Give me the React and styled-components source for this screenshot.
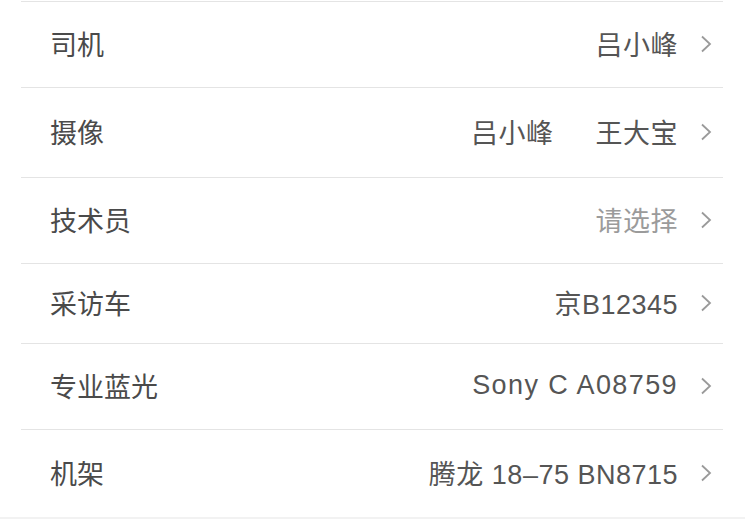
import React from "react"
import styled, { createGlobalStyle } from "styled-components"

const Global = createGlobalStyle`
  body {
    margin: 0;
    background: #fff;
    font-family: "Liberation Sans", "Noto Sans CJK SC", sans-serif;
  }
`

const List = styled.div`
  display: flex;
  flex-flow: column;
  padding-top: 1px;
  background: #fff;
`

const Row = styled.div`
  display: flex;
  align-items: center;
  justify-content: space-between;
  box-sizing: border-box;
  height: ${p => p.h + 1}px;
  margin: 0 22px 0 21px;
  border-top: 1px solid #e4e4e4;
  padding: 0 10px 2px 29px;
`

const Label = styled.span`
  font-size: 27px;
  color: #4a4a4a;
`

const Right = styled.div`
  display: flex;
  align-items: center;
`

const Value = styled.span`
  font-size: 27px;
  color: ${p => (p.muted ? "#9b9b9b" : "#555")};
  margin-left: ${p => (p.gap ? "42px" : "0")};
  letter-spacing: ${p => (p.wide ? "1.4px" : "0.5px")};
`

const Arrow = styled.svg`
  width: 13px;
  height: 18px;
  margin-left: 22px;
`

const Footer = styled.div`
  height: 2px;
  background: #f2f2f2;
`

const Chevron = () => (
  <Arrow viewBox="0 0 13 18">
    <path d="M2 1.5 L10 9 L2 16.5" fill="none" stroke="#9a9a9a" strokeWidth="1.8" />
  </Arrow>
)

const rows = [
  { label: "司机", values: ["吕小峰"], h: 85 },
  { label: "摄像", values: ["吕小峰", "王大宝"], h: 89 },
  { label: "技术员", values: ["请选择"], muted: true, h: 85 },
  { label: "采访车", values: ["京B12345"], h: 79 },
  { label: "专业蓝光", values: ["Sony C A08759"], wide: true, h: 85 },
  { label: "机架", values: ["腾龙 18–75 BN8715"], h: 87 },
]

export default function App () {
  return (
    <>
      <Global />
      <List>
        {rows.map(r => (
          <Row key={r.label} h={r.h}>
            <Label>{r.label}</Label>
            <Right>
              {r.values.map((v, i) => (
                <Value key={v} gap={i > 0} muted={r.muted} wide={r.wide}>{v}</Value>
              ))}
              <Chevron />
            </Right>
          </Row>
        ))}
      </List>
      <Footer />
    </>
  )
}
